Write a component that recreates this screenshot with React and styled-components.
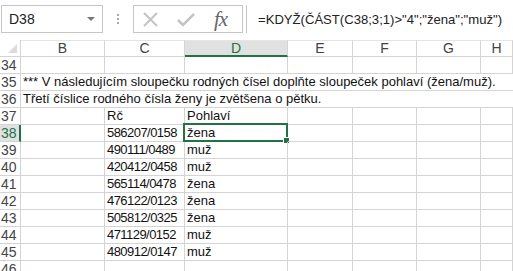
import React from "react";
import styled, { createGlobalStyle } from "styled-components";

const Global = createGlobalStyle`
  html, body { margin: 0; padding: 0; background: #fff; overflow: hidden; }
  body { font-family: "Liberation Sans", Arial, sans-serif; }
`;

const GREEN = "#217346";
const GRID = "#d4d4d4";

const Page = styled.div`
  width: 513px;
  height: 271px;
  overflow: hidden;
  background: #fff;
`;

const FormulaBar = styled.div`
  display: flex;
  align-items: center;
  height: 40px;
  padding: 5px 0 7px 1px;
  box-sizing: border-box;
`;

const NameBox = styled.div`
  width: 102px;
  height: 28px;
  box-sizing: border-box;
  border: 1px solid #c6c6c6;
  display: flex;
  align-items: center;
  justify-content: space-between;
  padding: 0 7px 0 7px;
  font-size: 14px;
  color: #222;
`;

const Arrow = styled.span`
  width: 0;
  height: 0;
  border-left: 4px solid transparent;
  border-right: 4px solid transparent;
  border-top: 4px solid #777;
`;

const Dots = styled.div`
  width: 30px;
  display: flex;
  flex-direction: column;
  align-items: center;
  gap: 2px;
  span {
    width: 2px;
    height: 2px;
    background: #a8a8a8;
  }
`;

const FxBox = styled.div`
  width: 110px;
  height: 28px;
  box-sizing: border-box;
  border: 1px solid #c6c6c6;
  display: flex;
  align-items: center;
  padding-left: 8px;
  gap: 17px;
`;

const Fx = styled.span`
  font-family: "Liberation Serif", "Times New Roman", serif;
  font-style: italic;
  font-size: 21px;
  color: #666;
  margin-left: 1px;
  letter-spacing: -1px;
`;

const FormulaInput = styled.div`
  flex: 1;
  height: 28px;
  margin-left: 3px;
  box-sizing: border-box;
  border-left: 1px solid #c6c6c6;
  display: flex;
  align-items: center;
  padding-left: 11px;
  font-size: 13.1px;
  color: #222;
  white-space: nowrap;
  overflow: hidden;
`;

const Sheet = styled.div`
  display: grid;
  grid-template-columns: 21px 84px 80px 103px 65px 64px 64px 32px;
  grid-auto-rows: 17px;
`;

const Corner = styled.div`
  box-sizing: border-box;
  border-right: 1px solid ${GRID};
  border-bottom: 1px solid ${GRID};
  position: relative;
  &::after {
    content: "";
    position: absolute;
    right: 3px;
    bottom: 3px;
    width: 0;
    height: 0;
    border-left: 9px solid transparent;
    border-bottom: 9px solid #dcdcdc;
  }
`;

const ColHead = styled.div`
  box-sizing: border-box;
  border-right: 1px solid ${GRID};
  border-top: 1px solid #e4e4e4;
  border-bottom: ${(p) => (p.$active ? `2px solid ${GREEN}` : `1px solid ${GRID}`)};
  background: ${(p) => (p.$active ? "#e1e1e1" : "#fff")};
  color: ${(p) => (p.$active ? GREEN : "#444")};
  font-size: 14px;
  line-height: 15px;
  text-align: center;
  overflow: hidden;
`;

const RowHead = styled.div`
  box-sizing: border-box;
  border-right: ${(p) => (p.$active ? `2px solid ${GREEN}` : `1px solid ${GRID}`)};
  border-bottom: 1px solid ${GRID};
  background: ${(p) => (p.$active ? "#e1e1e1" : "#fff")};
  color: ${(p) => (p.$active ? GREEN : "#444")};
  font-size: 14px;
  line-height: 16px;
  padding-left: 1px;
  overflow: hidden;
`;

const Cell = styled.div`
  box-sizing: border-box;
  border-right: ${(p) => (p.$noRight ? "none" : `1px solid ${GRID}`)};
  border-bottom: 1px solid ${GRID};
  font-size: 13px;
  letter-spacing: ${(p) => (p.$num ? "-0.55px" : "0")};
  line-height: 16px;
  color: #111;
  padding-left: 2px;
  white-space: nowrap;
  position: relative;
  grid-column: ${(p) => p.$span || "auto"};
  overflow: visible;
`;

const Selection = styled.div`
  position: absolute;
  left: -2px;
  top: -2px;
  right: -1px;
  bottom: -1px;
  border: 2px solid ${GREEN};
  pointer-events: none;
  &::after {
    content: "";
    position: absolute;
    right: -4px;
    bottom: -4px;
    width: 5px;
    height: 5px;
    background: ${GREEN};
    border: 1px solid #fff;
  }
`;

const cols = ["B", "C", "D", "E", "F", "G", "H"];

const data = [
  ["586207/0158", "žena"],
  ["490111/0489", "muž"],
  ["420412/0458", "muž"],
  ["565114/0478", "žena"],
  ["476122/0123", "žena"],
  ["505812/0325", "žena"],
  ["471129/0152", "muž"],
  ["480912/0147", "muž"],
];

function EmptyCells({ n }) {
  return Array.from({ length: n }, (_, i) => <Cell key={i} />);
}

export default function App() {
  return (
    <Page>
      <Global />
      <FormulaBar>
        <NameBox>
          D38
          <Arrow />
        </NameBox>
        <Dots>
          <span />
          <span />
          <span />
        </Dots>
        <FxBox>
          <svg width="17" height="17" viewBox="0 0 17 17">
            <path d="M2 2 L15 15 M15 2 L2 15" stroke="#c4c4c4" strokeWidth="2" fill="none" />
          </svg>
          <svg width="20" height="17" viewBox="0 0 20 17">
            <path d="M2 9 L7 14 L18 3" stroke="#c4c4c4" strokeWidth="2.6" fill="none" />
          </svg>
          <Fx>fx</Fx>
        </FxBox>
        <FormulaInput>=KDYŽ(ČÁST(C38;3;1)&gt;"4";"žena";"muž")</FormulaInput>
      </FormulaBar>
      <Sheet>
        <Corner />
        {cols.map((c) => (
          <ColHead key={c} $active={c === "D"}>
            {c}
          </ColHead>
        ))}

        <RowHead>34</RowHead>
        <EmptyCells n={7} />

        <RowHead>35</RowHead>
        <Cell $span="2 / -1" $noRight>
          *** V následujícím sloupečku rodných čísel doplňte sloupeček pohlaví (žena/muž).
        </Cell>

        <RowHead>36</RowHead>
        <Cell $span="2 / -1" $noRight>
          Třetí číslice rodného čísla ženy je zvětšena o pětku.
        </Cell>

        <RowHead>37</RowHead>
        <Cell />
        <Cell>Rč</Cell>
        <Cell>Pohlaví</Cell>
        <EmptyCells n={4} />

        {data.map(([rc, sex], i) => {
          const row = 38 + i;
          return (
            <React.Fragment key={row}>
              <RowHead $active={row === 38}>{row}</RowHead>
              <Cell />
              <Cell $num>{rc}</Cell>
              <Cell>
                {sex}
                {row === 38 && <Selection />}
              </Cell>
              <EmptyCells n={4} />
            </React.Fragment>
          );
        })}

        <RowHead>46</RowHead>
        <EmptyCells n={7} />
      </Sheet>
    </Page>
  );
}
